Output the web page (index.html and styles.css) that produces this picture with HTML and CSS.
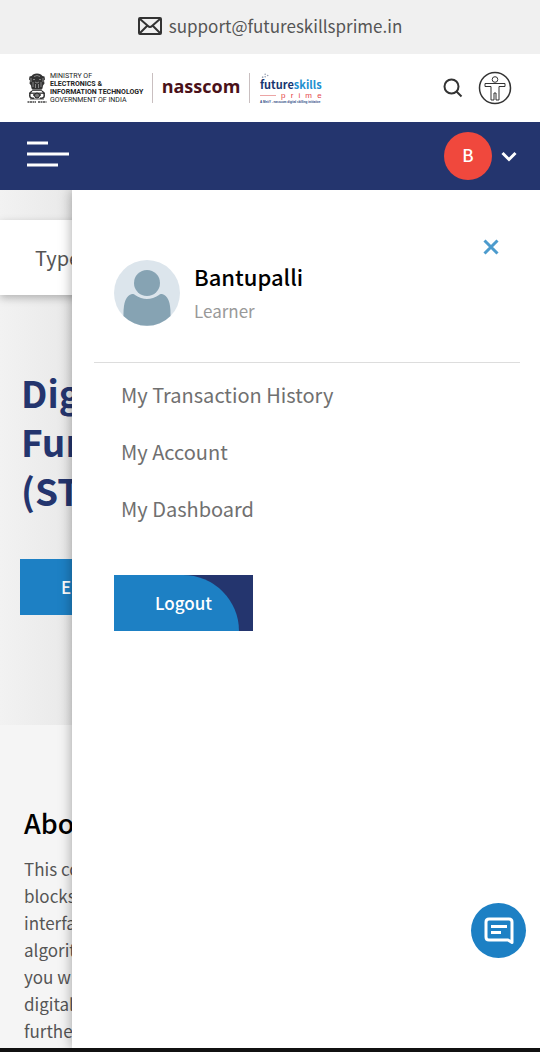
FILE: index.html
```html
<!DOCTYPE html>
<html lang="en">
<head>
<meta charset="utf-8">
<meta name="viewport" content="width=device-width, initial-scale=1">
<title>FutureSkills Prime</title>
<link rel="stylesheet" href="styles.css">
</head>
<body>
<div class="page">
  <div class="contact-bar">
    <svg class="mail-icon" viewBox="0 0 24 18" aria-hidden="true"><rect x="1" y="1" width="22" height="16" rx="1"/><path d="M2 2l8 7q2 2 4 0l8-7M2 16l7-7M22 16l-7-7"/></svg>
    <a href="mailto:support@futureskillsprime.in">support@futureskillsprime.in</a>
  </div>

  <header class="brand-bar">
    <div class="brands">
      <div class="ministry">
        <svg class="emblem" viewBox="0 0 20 31" aria-hidden="true">
          <path fill="#333" d="M6 1.5Q10-.5 14 1.5l1.500 1.500 2 .5.5 3-1 1 .5 3-1.500 2-.5 3-1.500 1H6l-1.500-1L4 12.500 2.500 10.500 3 7.500l-1-1 .5-3 2-.5z"/>
          <path fill="none" stroke="#aaa" stroke-width=".7" d="M7 3.500q3-2 6 0M6 6.500h2m4 0h2M8 9q2 2 4 0M6 9v5M14 9v5M8.500 11v4M11.500 11v4M4 5v4M16 5v4"/>
          <path fill="#555" d="M5 16.500h10v1.500H5zM2 19.500h16v1.500H2zM3 25.500h14v1H3z"/>
          <path fill="none" stroke="#333" stroke-width="1.500" d="M5 18q-3 2-2 6 2 2 4 1M15 18q3 2 2 6-2 2-4 1M6 22h8"/>
          <circle cx="10" cy="22.500" r="2.500" fill="#777" stroke="#222"/>
          <path fill="none" stroke="#444" stroke-width="1.500" stroke-dasharray="2 .5" d="M.5 29H9M11 29h8.500"/>
        </svg>
        <div class="ministry-name">MINISTRY OF<br><b>ELECTRONICS &amp;<br>INFORMATION TECHNOLOGY</b><br>GOVERNMENT OF INDIA</div>
      </div>
      <div class="nasscom">nasscom</div>
      <div class="prime-logo">
        <svg class="spark" viewBox="0 0 12 6" aria-hidden="true"><g fill="#9aa3b5"><circle cx="2" cy="5" r="1"/><circle cx="5" cy="1.500" r="1"/><circle cx="5" cy="4.500" r="1"/><circle cx="8" cy="3" r="1"/></g></svg>
        <div class="prime-name">future<span>skills</span></div>
        <div class="prime-sub"><i></i><span>p</span><span>r</span><span>i</span><span>m</span><span>e</span></div>
        <div class="prime-tag">A MeitY - nasscom digital skilling initiative</div>
      </div>
    </div>
    <div class="tools">
      <button class="icon-button" aria-label="Search"><svg class="search-icon" viewBox="0 0 20 20"><circle cx="8.500" cy="8.500" r="7"/><path d="M13.500 13.500l5 5"/></svg></button>
      <button class="icon-button" aria-label="Accessibility"><svg class="access-icon" viewBox="0 0 34 34"><circle cx="17" cy="17" r="15.500" stroke-width="1.500"/><circle cx="17" cy="8.500" r="2.800"/><path d="M7 12.500h20v3h-6V29h-3v-7h-2v7h-3V15.500H7z"/></svg></button>
    </div>
  </header>

  <nav class="main-nav">
    <button class="icon-button menu-button" aria-label="Menu"><svg class="menu-icon" viewBox="0 0 42 26"><path d="M0 2h21M0 13h42M0 24h31"/></svg></button>
    <button class="account-toggle" aria-label="Account menu"><span class="initial">B</span><svg class="chevron" viewBox="0 0 16 12"><path d="M1.500 3L8 9.500 14.500 3"/></svg></button>
  </nav>

  <div class="stage">
    <main class="content">
      <section class="hero">
        <input class="search-field" type="text" placeholder="Type" aria-label="Search courses">
        <div class="hero-text">
          <h1>Dig<br>Fun<br>(ST</h1>
          <button class="action">E</button>
        </div>
      </section>
      <section class="about">
        <h2>Abo</h2>
        <p>This co<br>blocks<br>interfa<br>algorit<br>you w<br>digital<br>furthe</p>
      </section>
    </main>

    <aside class="drawer">
      <div class="drawer-top">
        <button class="icon-button" aria-label="Close"><svg class="close-icon" viewBox="0 0 16 16"><path d="M1.500 1.500l13 13M14.500 1.500l-13 13"/></svg></button>
      </div>
      <div class="profile">
        <svg class="avatar" viewBox="0 0 66 66" aria-hidden="true"><circle cx="33" cy="33" r="33" fill="#dce5ec"/><circle cx="33" cy="23" r="13" fill="#86a3b3"/><path fill="#86a3b3" d="M18 34q2-.5 3 1 12 8 24 0 1-1.500 3-1 9 2 8.500 22a33 33 0 0 1-47 0Q9 36 18 34z"/></svg>
        <div>
          <div class="name">Bantupalli</div>
          <div class="role">Learner</div>
        </div>
      </div>
      <ul class="links">
        <li><a href="#history">My Transaction History</a></li>
        <li><a href="#account">My Account</a></li>
        <li><a href="#dashboard">My Dashboard</a></li>
      </ul>
      <button class="action logout"><span>Logout</span></button>
    </aside>

    <button class="chat" aria-label="Chat"><svg viewBox="0 0 30 28"><path d="M5 2h20q3 0 3 3v20.500L24 23H5q-3 0-3-3V5q0-3 3-3zM7 9.500h16M7 15.500h10"/></svg></button>
  </div>
  <div class="system-bar"></div>
</div>
</body>
</html>
```
FILE: styles.css
```css
* { box-sizing: border-box; }

body {
  margin: 0;
  font-family: "Noto Sans CJK SC", "Noto Sans", sans-serif;
  font-size: 20px;
  line-height: 28px;
  color: #555;
  background: #fff;
}

button { font: inherit; border: 0; cursor: pointer; }
a { color: inherit; text-decoration: none; }
h1, h2, p, ul { margin: 0; padding: 0; }
svg { display: block; fill: none; }

.page { min-height: 100vh; display: flex; flex-direction: column; }

.contact-bar {
  height: 54px;
  display: flex;
  align-items: center;
  justify-content: center;
  gap: 7px;
  padding-bottom: 2px;
  background: #f0f0f0;
  font-size: 17px;
}
.mail-icon { width: 24px; height: 18px; stroke: #333; stroke-width: 2; }

.brand-bar {
  height: 68px;
  display: flex;
  align-items: center;
  justify-content: space-between;
  padding: 0 28px 0 27px;
}
.brands { display: flex; align-items: center; }
.ministry { display: flex; align-items: center; gap: 3px; width: 125px; }
.emblem { width: 20px; height: 31px; }
.ministry-name {
  font-family: Roboto, sans-serif;
  font-size: 7px;
  line-height: 8px;
  color: #222;
  white-space: nowrap;
}
.nasscom {
  width: 98px;
  height: 30px;
  border: solid #c9bfc0;
  border-width: 0 1px;
  font-family: "Open Sans", sans-serif;
  font-weight: 700;
  font-size: 18px;
  line-height: 26px;
  color: #4a1119;
  text-align: center;
}
.prime-logo { padding-left: 10px; font-family: "Liberation Sans", sans-serif; }
.spark { width: 12px; height: 5px; }
.prime-name {
  font-family: "Noto Sans CJK SC", sans-serif;
  font-weight: 700;
  font-size: 11px;
  line-height: 12px;
  color: #17366f;
}
.prime-name span { color: #1e8fd0; }
.prime-sub {
  display: flex;
  justify-content: space-between;
  align-items: center;
  padding-top: 1px;
  font-size: 8px;
  line-height: 9px;
  color: #e5484b;
}
.prime-sub i { width: 16px; height: 1px; background: #eca5a5; }
.prime-tag { font-size: 3px; line-height: 4px; font-weight: 700; color: #29477f; }

.tools { display: flex; align-items: center; gap: 15px; }
.icon-button { padding: 0; background: none; }
.search-icon { width: 20px; height: 20px; stroke: #333; stroke-width: 2; }
.access-icon { width: 34px; height: 34px; stroke: #333; stroke-width: 1; }

.main-nav {
  height: 68px;
  display: flex;
  align-items: center;
  justify-content: space-between;
  padding: 0 23px 0 27px;
  background: #24356e;
}
.menu-button { padding-bottom: 5px; }
.menu-icon { width: 42px; height: 26px; stroke: #fff; stroke-width: 3; }
.account-toggle {
  display: flex;
  align-items: center;
  gap: 9px;
  padding: 0;
  background: none;
  color: #fff;
}
.initial {
  width: 48px;
  height: 48px;
  border-radius: 50%;
  background: #f0483d;
  font-size: 17px;
  font-weight: 500;
  line-height: 46px;
}
.chevron { width: 16px; height: 12px; stroke: #fff; stroke-width: 3; }

.stage { position: relative; flex: 1; overflow: hidden; background: #f5f5f5; }
.content { white-space: nowrap; }
.hero {
  padding: 30px 0 110px;
  background: linear-gradient(90deg, #f2f2f2, #e9e9e9 72px);
}
.search-field {
  display: block;
  width: 100%;
  height: 75px;
  padding: 0 35px;
  border: 0;
  background: #fff;
  box-shadow: 0 3px 8px rgba(0, 0, 0, 0.25);
  font: inherit;
}
.search-field::placeholder { color: #555; opacity: 1; }
.hero-text { padding: 73px 20px 0; }
h1 {
  padding-left: 1px;
  margin-bottom: 44px;
  font-size: 37px;
  line-height: 49px;
  font-weight: 700;
  color: #24356e;
}
.action {
  display: block;
  min-width: 139px;
  height: 56px;
  padding: 0 41px;
  background: #1d80c4;
  color: #fff;
  font-size: 17px;
  font-weight: 500;
  text-align: left;
}
.about { padding: 80px 24px 0; }
h2 { font-size: 27px; line-height: 36px; font-weight: 500; color: #000; }
.about p { padding-top: 14px; font-size: 17px; line-height: 27px; }

.drawer {
  position: absolute;
  inset: 0 0 0 72px;
  padding: 49px 20px 0 22px;
  background: #fff;
  box-shadow: 0 0 12px rgba(0, 0, 0, 0.35);
}
.drawer-top { display: flex; justify-content: flex-end; padding-right: 21px; }
.close-icon { width: 16px; height: 16px; stroke: #4c9bcd; stroke-width: 3; }
.profile {
  display: flex;
  align-items: center;
  gap: 14px;
  padding: 3px 20px 34px;
  border-bottom: 1px solid #ddd;
}
.avatar { width: 66px; height: 66px; }
.name { font-size: 22px; line-height: 36px; font-weight: 500; color: #000; }
.role { font-size: 17px; line-height: 34px; color: #999; }
.links {
  display: grid;
  gap: 29px;
  padding: 18px 27px 52px;
  list-style: none;
  color: #707070;
}
.logout {
  position: relative;
  overflow: hidden;
  margin-left: 20px;
  background: #24356e;
}
.logout::before {
  content: "";
  position: absolute;
  inset: 0 14px 0 0;
  background: #1d80c4;
  border-top-right-radius: 56px;
}
.logout span { position: relative; }
.chat {
  position: absolute;
  right: 14px;
  bottom: 90px;
  width: 55px;
  height: 55px;
  display: grid;
  place-items: center;
  padding: 0;
  border-radius: 50%;
  background: #1d80c4;
}
.chat svg { width: 30px; height: 28px; stroke: #fff; stroke-width: 3; stroke-linejoin: round; }
.system-bar { height: 4px; background: #111; }
```
